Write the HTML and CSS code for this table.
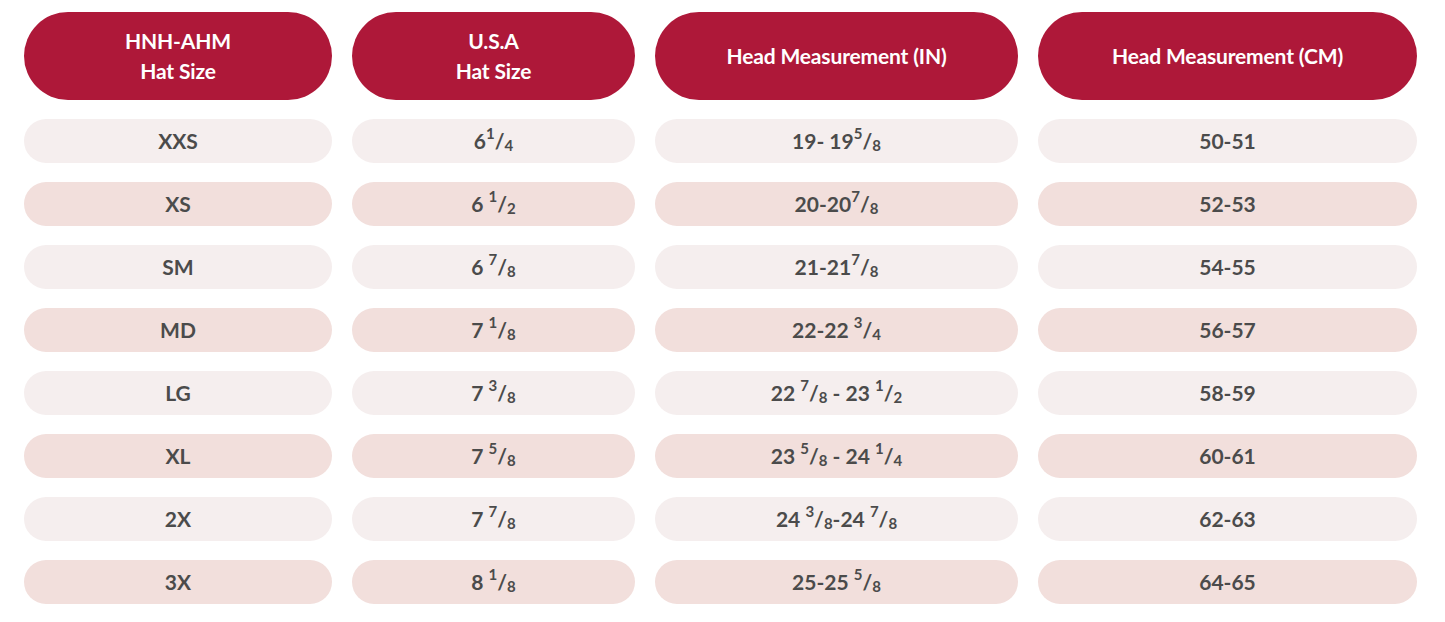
FILE: index.html
```html
<!DOCTYPE html>
<html lang="en">
<head>
<meta charset="utf-8">
<title>Hat Size Chart</title>
<link rel="stylesheet" href="styles.css">
</head>
<body>
<div class="chart">
  <div class="head">HNH-AHM<br>Hat Size</div>
  <div class="head">U.S.A<br>Hat Size</div>
  <div class="head">Head Measurement (IN)</div>
  <div class="head">Head Measurement (CM)</div>

  <div class="cell light">XXS</div>
  <div class="cell light">6<sup>1</sup>/<sub>4</sub></div>
  <div class="cell light">19- 19<sup>5</sup>/<sub>8</sub></div>
  <div class="cell light">50-51</div>

  <div class="cell dark">XS</div>
  <div class="cell dark">6 <sup>1</sup>/<sub>2</sub></div>
  <div class="cell dark">20-20<sup>7</sup>/<sub>8</sub></div>
  <div class="cell dark">52-53</div>

  <div class="cell light">SM</div>
  <div class="cell light">6 <sup>7</sup>/<sub>8</sub></div>
  <div class="cell light">21-21<sup>7</sup>/<sub>8</sub></div>
  <div class="cell light">54-55</div>

  <div class="cell dark">MD</div>
  <div class="cell dark">7 <sup>1</sup>/<sub>8</sub></div>
  <div class="cell dark">22-22 <sup>3</sup>/<sub>4</sub></div>
  <div class="cell dark">56-57</div>

  <div class="cell light">LG</div>
  <div class="cell light">7 <sup>3</sup>/<sub>8</sub></div>
  <div class="cell light">22 <sup>7</sup>/<sub>8</sub> - 23 <sup>1</sup>/<sub>2</sub></div>
  <div class="cell light">58-59</div>

  <div class="cell dark">XL</div>
  <div class="cell dark">7 <sup>5</sup>/<sub>8</sub></div>
  <div class="cell dark">23 <sup>5</sup>/<sub>8</sub> - 24 <sup>1</sup>/<sub>4</sub></div>
  <div class="cell dark">60-61</div>

  <div class="cell light">2X</div>
  <div class="cell light">7 <sup>7</sup>/<sub>8</sub></div>
  <div class="cell light">24 <sup>3</sup>/<sub>8</sub>-24 <sup>7</sup>/<sub>8</sub></div>
  <div class="cell light">62-63</div>

  <div class="cell dark">3X</div>
  <div class="cell dark">8 <sup>1</sup>/<sub>8</sub></div>
  <div class="cell dark">25-25 <sup>5</sup>/<sub>8</sub></div>
  <div class="cell dark">64-65</div>
</div>
</body>
</html>
```

FILE: styles.css
```css
html, body {
  margin: 0;
  padding: 0;
  background: #ffffff;
}

body {
  font-family: Lato, "Open Sans", "Liberation Sans", sans-serif;
  font-weight: 700;
}

.chart {
  display: grid;
  grid-template-columns: 308px 283px 363px 379px;
  grid-template-rows: 88px repeat(8, 44px);
  column-gap: 20px;
  row-gap: 19px;
  padding: 12px 0 0 24px;
}

.head {
  background: #ae1839;
  color: #ffffff;
  border-radius: 44px;
  display: flex;
  align-items: center;
  justify-content: center;
  text-align: center;
  font-size: 21px;
  line-height: 30px;
  letter-spacing: -0.15px;
}

.cell {
  border-radius: 22px;
  display: flex;
  align-items: center;
  justify-content: center;
  color: #4b4b4b;
  font-size: 21px;
  line-height: 22px;
  white-space: pre;
}

.light {
  background: #f5eeee;
}

.dark {
  background: #f2dfdc;
}

sup, sub {
  font-size: 15px;
  line-height: 0;
  position: relative;
  vertical-align: baseline;
}

sup {
  top: -8px;
}

sub {
  top: 4px;
}
```
